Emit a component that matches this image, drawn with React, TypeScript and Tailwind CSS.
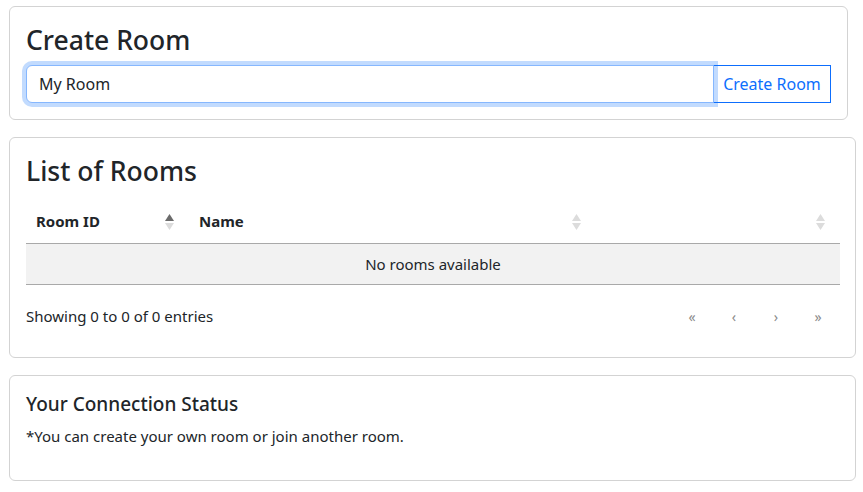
import React from "react";

const font = { fontFamily: '"Noto Sans", "Open Sans", sans-serif' };

function SortIcon({ active }: { active?: boolean }) {
  return (
    <svg width="9" height="16" viewBox="0 0 9 16" className="shrink-0">
      <polygon points="4.5,0 9,7 0,7" fill={active ? "#6b6b6b" : "#dcdcdc"} />
      <polygon points="0,9 9,9 4.5,16" fill="#dcdcdc" />
    </svg>
  );
}

export default function App() {
  return (
    <div className="w-[863px] h-[492px] bg-white text-[#212529] overflow-hidden" style={font}>
      <div className="pt-[6px] pl-[9px] pr-[7px] flex flex-col gap-[17px]">
        {/* Create Room card */}
        <div className="mr-[8px] border border-[#d3d3d3] rounded-[6px] px-[16px] pt-[16px] pb-[16px]">
          <h2 className="text-[26.5px] leading-[35px] font-medium mb-[7px]">Create Room</h2>
          <div className="flex h-[38px]">
            <div className="relative z-10 flex-1 flex items-center border border-[#86b7fe] rounded-l-[6px] shadow-[0_0_0_4px_rgba(13,110,253,0.25)] px-[12px] text-[16px] bg-white">
              My Room
            </div>
            <button className="-ml-px w-[118px] border border-[#0d6efd] text-[#0d6efd] text-[16px] flex items-center justify-center bg-white">
              Create Room
            </button>
          </div>
        </div>

        {/* List of Rooms card */}
        <div className="border border-[#d3d3d3] rounded-[6px] px-[16px] pt-[16px] pb-[29px]">
          <h2 className="text-[26.5px] leading-[35px] font-medium mb-[11px]">List of Rooms</h2>
          <div className="w-[814px]">
            <div className="flex h-[44px] border-b border-[#a9a9a9] text-[15px] font-bold">
              <div className="w-[164px] flex items-center justify-between pl-[10px] pr-[16px]">
                <span>Room ID</span>
                <SortIcon active />
              </div>
              <div className="w-[407px] flex items-center justify-between pl-[9px] pr-[16px]">
                <span>Name</span>
                <SortIcon />
              </div>
              <div className="flex-1 flex items-center justify-end pr-[15px]">
                <SortIcon />
              </div>
            </div>
            <div className="h-[41px] bg-[#f2f2f2] border-b border-[#a9a9a9] flex items-center justify-center text-[15px]">
              No rooms available
            </div>
          </div>
          <div className="flex items-center justify-between h-[24px] mt-[19px] text-[15px]">
            <span>Showing 0 to 0 of 0 entries</span>
            <div className="flex items-center text-[14px] text-[#8a8a8a] pr-0">
              <span className="w-[42px] text-center">«</span>
              <span className="w-[42px] text-center">‹</span>
              <span className="w-[42px] text-center">›</span>
              <span className="w-[42px] text-center">»</span>
            </div>
          </div>
        </div>

        {/* Connection status card */}
        <div className="border border-[#d3d3d3] rounded-[6px] px-[16px] pt-[16px] pb-[32px]">
          <h5 className="text-[19px] leading-[24px] font-medium mb-[8px]">Your Connection Status</h5>
          <p className="text-[15px] leading-[24px]">*You can create your own room or join another room.</p>
        </div>
      </div>
    </div>
  );
}
